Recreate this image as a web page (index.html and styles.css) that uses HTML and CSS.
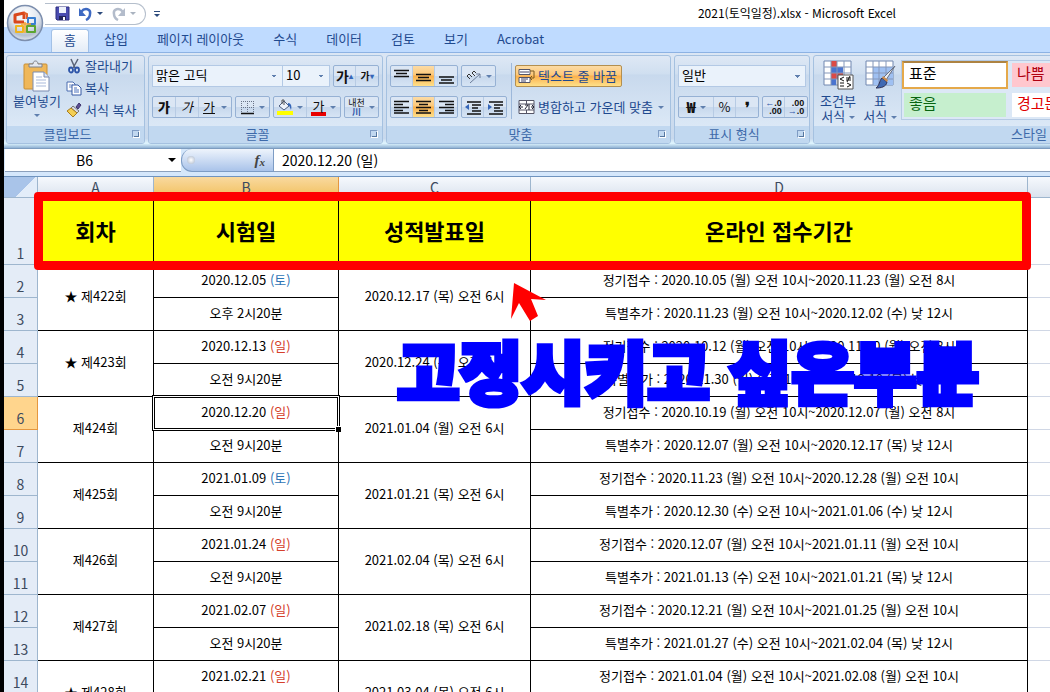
FILE: index.html
```
<!DOCTYPE html>
<html lang="ko">
<head>
    <meta charset="UTF-8">
    <meta name="viewport" content="width=device-width, initial-scale=1.0">
    <title>2021(토익일정).xlsx - Microsoft Excel</title>
    <link rel="stylesheet" href="styles.css">
</head>
<body>
    <div class="window">
        <header class="titlebar">
            <button class="office-button" aria-label="Office 단추">
                <svg width="38" height="38" viewBox="0 0 38 38">
                    <defs>
                        <radialGradient id="orb" cx="50%" cy="25%" r="80%">
                            <stop offset="0" stop-color="#ffffff"/>
                            <stop offset="0.5" stop-color="#dfe5ee"/>
                            <stop offset="0.75" stop-color="#b4bfd0"/>
                            <stop offset="1" stop-color="#eef4fb"/>
                        </radialGradient>
                    </defs>
                    <circle cx="19" cy="19" r="17.5" fill="url(#orb)" stroke="#7d8fae" stroke-width="1.5"/>
                    <g fill="none" stroke-linejoin="round">
                        <path d="M18 18h-9V11l9-2v6" stroke="#d9471c" stroke-width="3"/>
                        <path d="M18 9l3 1v5" stroke="#e2602a" stroke-width="2"/>
                        <path d="M22 14h7v6h-7z" stroke="#3b7fd0" stroke-width="2"/>
                        <path d="M10 22h7v6h-7z" stroke="#efb41d" stroke-width="2"/>
                        <path d="M21 22h8v6h-8z" stroke="#5ba532" stroke-width="2"/>
                        <path d="M19 18v11M15 20h10" stroke="#f3a43a" stroke-width="1.5"/>
                    </g>
                </svg>
            </button>
            <div class="quick-access">
                <button aria-label="저장">
                    <svg width="15" height="15" viewBox="0 0 15 15"><path d="M1 1h13v13H2l-1-1z" fill="#4a4cb0" stroke="#2d2f80"/><path d="M4 1h7v6H4z" fill="#eef2fb"/><path d="M4 10h7v4H4z" fill="#23255c"/><path d="M8 11h2v3H8z" fill="#fff"/></svg>
                </button>
                <button class="with-arrow" aria-label="실행 취소">
                    <svg width="15" height="14" viewBox="0 0 15 14"><path d="M3 5C7 0 13 2 12 7c0 3-2 5-4 6" fill="none" stroke="#3d69c2" stroke-width="2.5"/><path d="M1 1v8h7z" fill="#3d69c2"/></svg>
                    <span class="arrow"></span>
                </button>
                <button class="with-arrow disabled" aria-label="다시 실행">
                    <svg width="15" height="14" viewBox="0 0 15 14"><path d="M12 5C8 0 2 2 3 7c0 3 2 5 4 6" fill="none" stroke="#b3bccb" stroke-width="2.5"/><path d="M14 1v8H7z" fill="#b3bccb"/></svg>
                    <span class="arrow"></span>
                </button>
            </div>
            <button class="customize" aria-label="빠른 실행 도구 모음 사용자 지정"><span class="arrow"></span></button>
            <h1>2021(토익일정).xlsx - Microsoft Excel</h1>
        </header>

        <nav class="tabs">
            <button class="tab active">홈</button>
            <button class="tab">삽입</button>
            <button class="tab">페이지 레이아웃</button>
            <button class="tab">수식</button>
            <button class="tab">데이터</button>
            <button class="tab">검토</button>
            <button class="tab">보기</button>
            <button class="tab">Acrobat</button>
        </nav>

        <div class="ribbon">
            <section class="group clipboard">
                <div class="group-body">
                    <button class="big-button">
                        <svg width="28" height="32" viewBox="0 0 28 32"><rect x="1" y="4" width="23" height="25" rx="1" fill="#efb759" stroke="#c98f35"/><path d="M6 7V4h4c0-4 5-4 5 0h4v3z" fill="#e4e7ee" stroke="#7d818c"/><path d="M10 12h11l5 5v14H10z" fill="#fff" stroke="#7a8bb0"/><path d="M21 12v5h5" fill="#dce5f5" stroke="#7a8bb0"/><path d="M13 17h6M13 20h10M13 23h10M13 26h10" stroke="#a9b9da"/></svg>
                        <span>붙여넣기</span>
                        <span class="arrow"></span>
                    </button>
                    <div class="commands">
                        <button>
                            <svg width="16" height="16" viewBox="0 0 16 16"><path d="M5 1l4 9M12 1L7 10" stroke="#5b6478" stroke-width="1.5" fill="none"/><ellipse cx="5" cy="12" rx="2" ry="2.5" fill="none" stroke="#2e55a8" stroke-width="1.8"/><ellipse cx="11" cy="12" rx="2" ry="2.5" fill="none" stroke="#2e55a8" stroke-width="1.8"/></svg>
                            잘라내기
                        </button>
                        <button>
                            <svg width="16" height="16" viewBox="0 0 16 16"><path d="M1 2h6l2 2v7H1z" fill="#fff" stroke="#4a6db0"/><path d="M3 5h4M3 7h4" stroke="#6f8cc4"/><path d="M6 5h6l3 3v7H6z" fill="#fff" stroke="#3558a3"/><path d="M8 8h3M8 10h5M8 12h5" stroke="#4c72bd"/></svg>
                            복사
                        </button>
                        <button>
                            <svg width="16" height="16" viewBox="0 0 16 16"><path d="M10 5l3-4 2 2-3 4z" fill="#5c4f92" stroke="#403670"/><path d="M7 4l6 5-2 2-6-5z" fill="#d8dbe5" stroke="#777"/><path d="M5 6l6 5-4 4-6-6z" fill="#f3cf55" stroke="#a97c1b"/></svg>
                            서식 복사
                        </button>
                    </div>
                </div>
                <footer>클립보드<button class="launcher" aria-label="클립보드 옵션"></button></footer>
            </section>

            <section class="group font">
                <div class="group-body rows">
                    <div class="row">
                        <div class="joined">
                            <select class="font-name" aria-label="글꼴"><option>맑은 고딕</option></select>
                            <select class="font-size" aria-label="글꼴 크기"><option>10</option></select>
                        </div>
                        <div class="button-set">
                            <button class="grow" aria-label="글꼴 크기 크게">가<sup>▴</sup></button>
                            <button class="shrink" aria-label="글꼴 크기 작게">가<sup>▾</sup></button>
                        </div>
                    </div>
                    <div class="row">
                        <div class="button-set wide">
                            <button class="bold">가</button>
                            <button class="italic">가</button>
                            <button class="underline"><u>가</u><span class="arrow"></span></button>
                        </div>
                        <div class="button-set">
                            <button class="split" aria-label="테두리">
                                <svg width="15" height="15" viewBox="0 0 15 15"><path d="M1.5 1v12M7.5 1v12M13.5 1v12M1 1.5h13M1 7.5h13" stroke="#6a7488" stroke-dasharray="1 1"/><path d="M1 13.5h13" stroke="#111" stroke-width="1.5"/></svg>
                                <span class="arrow"></span>
                            </button>
                        </div>
                        <div class="button-set">
                            <button class="split" aria-label="채우기 색">
                                <svg width="16" height="16" viewBox="0 0 16 16"><path d="M2 7l5-5 5 5-5 4z" fill="#eef3fa" stroke="#4b5d80"/><path d="M5 5V1h2v5" fill="none" stroke="#555"/><path d="M11 4c3 0 4 3 3 7-1-2-1-4-3-5z" fill="#3566b8"/><path d="M0 12h16v4H0z" fill="#ffff00"/></svg>
                                <span class="arrow"></span>
                            </button>
                            <button class="split" aria-label="글꼴 색"><span class="font-color">가</span><span class="arrow"></span></button>
                        </div>
                        <div class="button-set">
                            <button class="split phonetic"><span>내천<b>川</b></span><span class="arrow"></span></button>
                        </div>
                    </div>
                </div>
                <footer>글꼴<button class="launcher" aria-label="글꼴 옵션"></button></footer>
            </section>

            <section class="group align">
                <div class="group-body">
                    <div class="rows">
                        <div class="row">
                            <div class="button-set">
                                <button aria-label="위쪽 맞춤"><svg width="15" height="15"><path d="M0 1.5h15M2 4.5h11M0 7.5h15" stroke="#111" stroke-width="1.5"/></svg></button>
                                <button class="on" aria-label="가운데 맞춤"><svg width="15" height="15"><path d="M0 5.5h15M2 8.5h11M0 11.5h15" stroke="#111" stroke-width="1.5"/></svg></button>
                                <button aria-label="아래쪽 맞춤"><svg width="15" height="15"><path d="M0 8h15M2 11h11M0 14h15" stroke="#111" stroke-width="1.5"/></svg></button>
                            </div>
                            <div class="button-set">
                                <button class="split" aria-label="방향">
                                    <svg width="16" height="15" viewBox="0 0 16 15"><path d="M1 7l3 3M3 5l3 3M6 4l3 3M1 7l2-2 2 2M6 4l2-2 2 2" fill="none" stroke="#333"/><path d="M4 14L14 5M14 9V5h-4" fill="none" stroke="#6c7c98"/></svg>
                                    <span class="arrow"></span>
                                </button>
                            </div>
                        </div>
                        <div class="row">
                            <div class="button-set">
                                <button aria-label="왼쪽 맞춤"><svg width="15" height="14"><path d="M0 1.5h15M0 4.5h9M0 7.5h15M0 10.5h9M0 13h15" stroke="#111" stroke-width="1.5"/></svg></button>
                                <button class="on" aria-label="중앙 맞춤"><svg width="15" height="14"><path d="M0 1.5h15M3 4.5h9M0 7.5h15M3 10.5h9M0 13h15" stroke="#111" stroke-width="1.5"/></svg></button>
                                <button aria-label="오른쪽 맞춤"><svg width="15" height="14"><path d="M0 1.5h15M6 4.5h9M0 7.5h15M6 10.5h9M0 13h15" stroke="#111" stroke-width="1.5"/></svg></button>
                            </div>
                            <div class="button-set">
                                <button aria-label="내어쓰기"><svg width="16" height="15"><path d="M2 2h14M7 5h9M7 8h6M7 11h9M2 14h14" stroke="#111" stroke-width="1.5"/><path d="M0 7l4-3v6z" fill="#3566b8"/></svg></button>
                                <button aria-label="들여쓰기"><svg width="16" height="15"><path d="M2 2h14M7 5h9M7 8h6M7 11h9M2 14h14" stroke="#111" stroke-width="1.5"/><path d="M5 7L1 4v6z" fill="#3566b8"/></svg></button>
                            </div>
                        </div>
                    </div>
                    <div class="rows text-rows">
                        <button class="text-button on">
                            <svg width="17" height="16" viewBox="0 0 17 16"><path d="M1 1.5h11v5H1zM1 9.5h11v5H1z" fill="#fff" stroke="#556"/><path d="M2 4h9M3 11h7M3 13h5" stroke="#446"/><path d="M12 3h4v7h-3M14 8l-2 2 2 2" fill="none" stroke="#7a5a20"/></svg>
                            텍스트 줄 바꿈
                        </button>
                        <button class="text-button">
                            <svg width="17" height="16" viewBox="0 0 17 16"><path d="M1 1.5h15v13H1zM1 5h15M1 11h15M8.5 1v4M8.5 11v4" fill="#fff" stroke="#556"/><path d="M1 8h4M3 6L1 8l2 2M16 8h-3M14 6l2 2-2 2M7 6h3l-3 4M11 5v6" fill="none" stroke="#223"/></svg>
                            병합하고 가운데 맞춤<span class="arrow"></span>
                        </button>
                    </div>
                </div>
                <footer>맞춤<button class="launcher" aria-label="맞춤 옵션"></button></footer>
            </section>

            <section class="group number">
                <div class="group-body rows">
                    <div class="row">
                        <select class="number-format" aria-label="표시 형식"><option>일반</option></select>
                    </div>
                    <div class="row">
                        <div class="button-set currency">
                            <button class="split"><b>₩</b><span class="arrow"></span></button>
                            <button>%</button>
                            <button><b>❜</b></button>
                        </div>
                        <div class="button-set decimals">
                            <button><span><i>←</i>.0<br>.00</span></button>
                            <button><span>.00<br><i>→</i>.0</span></button>
                        </div>
                    </div>
                </div>
                <footer>표시 형식<button class="launcher" aria-label="표시 형식 옵션"></button></footer>
            </section>

            <section class="group styles">
                <div class="group-body">
                    <button class="big-button">
                        <svg width="32" height="30" viewBox="0 0 32 30"><path d="M2 1h27v24H2z" fill="#fff" stroke="#7187b0"/><path d="M9 1h6v6H9zM9 13h12v6H9z" fill="#dc4a45"/><path d="M9 7h12v6H9z" fill="#4a74cf"/><path d="M9 19h5v6H9z" fill="#4a74cf"/><path d="M2 7h27M2 13h27M2 19h27M9 1v24M15 1v24M22 1v24" stroke="#8497ba" fill="none"/><path d="M16 15h15v14H16z" fill="#fff" stroke="#555"/><path d="M22 17l-4 2 4 2M18 23h4M24 18h5M24 20h5M28 16l-3 6M25 23l4 2-4 2M18 26h4" fill="none" stroke="#111"/></svg>
                        <span>조건부</span>
                        <span>서식 <span class="arrow"></span></span>
                    </button>
                    <button class="big-button">
                        <svg width="32" height="30" viewBox="0 0 32 30"><path d="M2 1h27v24H2z" fill="#fff" stroke="#7187b0"/><path d="M9 7h20v18H9z" fill="#9fc0f2"/><path d="M2 7h27M2 13h27M2 19h27M9 1v24M15 1v24M22 1v24" stroke="#8497ba" fill="none"/><path d="M31 6l-9 14-3-2z" fill="#e9edf4" stroke="#6a7080"/><path d="M18 18l5 4c-1 5-6 6-11 6 4-3 3-7 6-10z" fill="#4069b2" stroke="#335"/><path d="M18 18l5 4 1-2-5-4z" fill="#c98a4c"/></svg>
                        <span>표</span>
                        <span>서식 <span class="arrow"></span></span>
                    </button>
                    <div class="gallery">
                        <button class="style-normal">표준</button>
                        <button class="style-bad">나쁨</button>
                        <button class="style-good">좋음</button>
                        <button class="style-warning">경고문</button>
                    </div>
                </div>
                <footer>스타일</footer>
            </section>
        </div>

        <div class="formula-bar">
            <div class="name-box">
                <input type="text" value="B6" aria-label="이름 상자">
                <span class="arrow"></span>
            </div>
            <div class="fx"><span class="knob"></span><button aria-label="함수 삽입">f<small>x</small></button></div>
            <input class="formula" type="text" value="2020.12.20 (일)" aria-label="수식 입력줄">
        </div>

        <main class="sheet">
            <table>
                <colgroup>
                    <col class="col-head">
                    <col class="col-a">
                    <col class="col-b">
                    <col class="col-c">
                    <col class="col-d">
                    <col>
                </colgroup>
                <thead>
                    <tr>
                        <th class="corner"></th>
                        <th>A</th>
                        <th class="selected">B</th>
                        <th>C</th>
                        <th>D</th>
                        <th class="last"></th>
                    </tr>
                </thead>
                <tbody>
                    <tr class="title-row">
                        <th scope="row">1</th>
                        <td>회차</td>
                        <td>시험일</td>
                        <td>성적발표일</td>
                        <td>온라인 접수기간</td>
                        <td class="empty"></td>
                    </tr>
                    <tr>
                        <th scope="row">2</th>
                        <td rowspan="2">★ 제422회</td>
                        <td>2020.12.05 <span class="sat">(토)</span></td>
                        <td rowspan="2">2020.12.17 (목) 오전 6시</td>
                        <td>정기접수 : 2020.10.05 (월) 오전 10시~2020.11.23 (월) 오전 8시</td>
                        <td class="empty"></td>
                    </tr>
                    <tr>
                        <th scope="row">3</th>
                        <td>오후 2시20분</td>
                        <td>특별추가 : 2020.11.23 (월) 오전 10시~2020.12.02 (수) 낮 12시</td>
                        <td class="empty"></td>
                    </tr>
                    <tr>
                        <th scope="row">4</th>
                        <td rowspan="2">★ 제423회</td>
                        <td>2020.12.13 <span class="sun">(일)</span></td>
                        <td rowspan="2">2020.12.24 (목) 오전 6시</td>
                        <td>정기접수 : 2020.10.12 (월) 오전 10시~2020.11.30 (월) 오전 8시</td>
                        <td class="empty"></td>
                    </tr>
                    <tr>
                        <th scope="row">5</th>
                        <td>오전 9시20분</td>
                        <td>특별추가 : 2020.11.30 (월) 오전 10시~2020.12.10 (목) 낮 12시</td>
                        <td class="empty"></td>
                    </tr>
                    <tr>
                        <th scope="row" class="selected">6</th>
                        <td rowspan="2">제424회</td>
                        <td class="active-cell">2020.12.20 <span class="sun">(일)</span></td>
                        <td rowspan="2">2021.01.04 (월) 오전 6시</td>
                        <td>정기접수 : 2020.10.19 (월) 오전 10시~2020.12.07 (월) 오전 8시</td>
                        <td class="empty"></td>
                    </tr>
                    <tr>
                        <th scope="row">7</th>
                        <td>오전 9시20분</td>
                        <td>특별추가 : 2020.12.07 (월) 오전 10시~2020.12.17 (목) 낮 12시</td>
                        <td class="empty"></td>
                    </tr>
                    <tr>
                        <th scope="row">8</th>
                        <td rowspan="2">제425회</td>
                        <td>2021.01.09 <span class="sat">(토)</span></td>
                        <td rowspan="2">2021.01.21 (목) 오전 6시</td>
                        <td>정기접수 : 2020.11.23 (월) 오전 10시~2020.12.28 (월) 오전 10시</td>
                        <td class="empty"></td>
                    </tr>
                    <tr>
                        <th scope="row">9</th>
                        <td>오전 9시20분</td>
                        <td>특별추가 : 2020.12.30 (수) 오전 10시~2021.01.06 (수) 낮 12시</td>
                        <td class="empty"></td>
                    </tr>
                    <tr>
                        <th scope="row">10</th>
                        <td rowspan="2">제426회</td>
                        <td>2021.01.24 <span class="sun">(일)</span></td>
                        <td rowspan="2">2021.02.04 (목) 오전 6시</td>
                        <td>정기접수 : 2020.12.07 (월) 오전 10시~2021.01.11 (월) 오전 10시</td>
                        <td class="empty"></td>
                    </tr>
                    <tr>
                        <th scope="row">11</th>
                        <td>오전 9시20분</td>
                        <td>특별추가 : 2021.01.13 (수) 오전 10시~2021.01.21 (목) 낮 12시</td>
                        <td class="empty"></td>
                    </tr>
                    <tr>
                        <th scope="row">12</th>
                        <td rowspan="2">제427회</td>
                        <td>2021.02.07 <span class="sun">(일)</span></td>
                        <td rowspan="2">2021.02.18 (목) 오전 6시</td>
                        <td>정기접수 : 2020.12.21 (월) 오전 10시~2021.01.25 (월) 오전 10시</td>
                        <td class="empty"></td>
                    </tr>
                    <tr>
                        <th scope="row">13</th>
                        <td>오전 9시20분</td>
                        <td>특별추가 : 2021.01.27 (수) 오전 10시~2021.02.04 (목) 낮 12시</td>
                        <td class="empty"></td>
                    </tr>
                    <tr>
                        <th scope="row">14</th>
                        <td rowspan="2">★ 제428회</td>
                        <td>2021.02.21 <span class="sun">(일)</span></td>
                        <td rowspan="2">2021.03.04 (목) 오전 6시</td>
                        <td>정기접수 : 2021.01.04 (월) 오전 10시~2021.02.08 (월) 오전 10시</td>
                        <td class="empty"></td>
                    </tr>
                    <tr>
                        <th scope="row">15</th>
                        <td></td>
                        <td></td>
                        <td class="empty"></td>
                    </tr>
                </tbody>
            </table>

            <!-- notes drawn over the sheet -->
            <div class="mark-box"></div>
            <svg class="mark-arrow" width="36" height="40" viewBox="0 0 36 40"><path d="M4 1l32 17-15-1 7 17-8 5-11-18-8 16z" fill="#ff0000"/></svg>
            <p class="mark-text">고정시키고 싶은부분</p>
        </main>
    </div>
</body>
</html>
```
FILE: styles.css
```
* {
    box-sizing: border-box;
}
body {
    margin: 0;
    height: 100vh;
    overflow: hidden;
    background: #000;
    font-family: "Noto Sans CJK KR", sans-serif;
    font-size: 13px;
    line-height: 16px;
    color: #000;
}
button, input, select {
    font: inherit;
    color: inherit;
    margin: 0;
    padding: 0;
    border: none;
    background: none;
}
button {
    display: flex;
    align-items: center;
    justify-content: center;
    white-space: nowrap;
}
svg {
    flex: none;
}
.window {
    margin-left: 4px;
    height: 100%;
    background: #fff;
    overflow: hidden;
    position: relative;
}
.arrow {
    display: inline-block;
    flex: none;
    border: 3px solid transparent;
    border-top-color: #5f7fae;
    border-bottom: none;
}

/* title bar */
.titlebar {
    display: flex;
    align-items: center;
    height: 27px;
    padding-left: 41px;
}
.titlebar h1 {
    margin: 0 154px 0 auto;
    padding-bottom: 2px;
    font-size: 12px;
    font-weight: normal;
}
.office-button {
    position: absolute;
    left: 2px;
    top: 4px;
    z-index: 2;
}
.quick-access {
    display: flex;
    align-items: center;
    gap: 8px;
    width: 101px;
    height: 22px;
    padding-left: 10px;
    border: 1px solid #b5bfcc;
    border-left: none;
    border-radius: 0 11px 11px 0;
}
.quick-access .with-arrow {
    gap: 4px;
}
.quick-access .arrow, .customize .arrow {
    border-top-color: #2c4a7c;
}
.quick-access .disabled .arrow {
    border-top-color: #aab3c0;
}
.customize {
    margin-left: 8px;
    padding-top: 2px;
    border-top: 1px solid #2c4a7c;
}

/* tabs */
.tabs {
    display: flex;
    gap: 1px;
    height: 25px;
    padding: 2px 0 0 47px;
    background: #bfdbff;
    color: #1f4a8f;
}
.tab {
    padding: 0 14px 3px;
}
.tab.active {
    padding: 0 12px 3px;
    border: 1px solid #a3c1e6;
    border-bottom: none;
    border-radius: 3px 3px 0 0;
    background: linear-gradient(#fff, #e3ecf7);
}

/* ribbon */
.ribbon {
    display: flex;
    gap: 3px;
    height: 97px;
    padding: 2px 0 4px 2px;
    border-top: 1px solid #8db2e3;
    border-bottom: 1px solid #7d9cbf;
    background: linear-gradient(#dbe6f4, #c8d9ed 90%, #e0f6ff 95%, #8fb1d3);
    color: #1f4a8f;
}
.group {
    display: flex;
    flex-direction: column;
    flex: none;
    border: 1px solid #a5c1e0;
    border-radius: 3px;
    background: linear-gradient(#dee8f5, #d0dff0 20%, #c8d9ed 22%, #dbe8f6 80%);
    overflow: hidden;
}
.group footer {
    display: flex;
    justify-content: center;
    align-items: center;
    height: 17px;
    padding: 0 16px 2px 0;
    background: #c1d8f0;
    color: #3e6aaa;
    position: relative;
}
.group-body {
    display: flex;
    flex: 1;
    padding: 0 3px;
}
.clipboard {
    width: 139px;
}
.font {
    width: 235px;
}
.align {
    width: 285px;
}
.number {
    width: 136px;
}
.styles {
    flex: 1 0 420px;
}
.launcher {
    position: absolute;
    right: 4px;
    top: 4px;
    width: 8px;
    height: 8px;
    border: 1px solid #7f9cc4;
    border-right-color: #fff;
    border-bottom-color: #fff;
}
.launcher::after {
    content: "";
    width: 4px;
    height: 4px;
    border: solid #55769f;
    border-width: 0 1px 1px 0;
}
.rows {
    display: flex;
    flex-direction: column;
    gap: 9px;
    padding-top: 9px;
}
.row {
    display: flex;
    gap: 3px;
}
.joined {
    display: flex;
}
select {
    height: 22px;
    padding: 0 0 2px 3px;
    border: 1px solid #b3c9e5;
    background-color: #eaf2fb;
    background-image: conic-gradient(from -45deg at 50% 100%, #5f7fae 90deg, transparent 0);
    background-size: 6px 3px;
    background-position: right 5px center;
    background-repeat: no-repeat;
    color: #000;
    appearance: none;
}
.font-name {
    width: 131px;
}
.font-size {
    width: 48px;
    margin-left: -1px;
}
.number-format {
    width: 128px;
}
.button-set {
    display: flex;
    height: 22px;
    border: 1px solid #96b1d4;
    border-radius: 2px;
    background: linear-gradient(#dbe6f4 50%, #c6d7ec 50%, #d6e4f4);
    color: #111;
}
.button-set button {
    width: 22px;
    border-right: 1px solid #b7cbe4;
}
.button-set button:last-child {
    border-right: none;
}
.button-set button.split {
    width: 33px;
    gap: 4px;
}
.button-set.wide button {
    width: 23px;
}
.button-set.wide button.underline {
    width: 32px;
    gap: 6px;
}
.button-set button.on, .text-button.on {
    background: linear-gradient(#fcdba5, #fdc878 45%, #fbb04c 50%, #fee08a);
}
.bold {
    font-weight: 900;
}
.italic {
    font-style: italic;
}
.grow {
    font-size: 14px;
    font-weight: bold;
}
.shrink {
    font-size: 10px;
    font-weight: bold;
}
.button-set sup {
    font-size: 8px;
    color: #3566b8;
}
.font-color {
    height: 17px;
    line-height: 13px;
    border-bottom: 4px solid #e80000;
    padding: 0 2px;
}
.phonetic {
    font-size: 9px;
    line-height: 9px;
}
.phonetic b {
    display: block;
    color: #2e55a8;
}
.big-button {
    flex-direction: column;
    justify-content: flex-start;
    padding-top: 4px;
    line-height: 15px;
}
.big-button svg {
    margin-bottom: 3px;
}
.big-button > .arrow {
    margin-top: 6px;
}
.big-button .arrow {
    vertical-align: middle;
}
.clipboard .big-button {
    width: 54px;
}
.clipboard .big-button svg {
    margin-bottom: 1px;
}
.commands {
    display: flex;
    flex-direction: column;
    gap: 6px;
    padding: 2px 0 0 2px;
}
.commands button {
    justify-content: flex-start;
    gap: 3px;
}
.text-rows {
    margin: 7px 0 7px 4px;
    padding: 2px 0 0 3px;
    border-left: 1px solid #9db8da;
}
.text-button {
    justify-content: flex-start;
    gap: 3px;
    width: 151px;
    height: 22px;
    padding: 0 2px;
    border: 1px solid transparent;
}
.text-button .arrow {
    margin-left: 2px;
}
.text-button.on {
    width: 107px;
    border-color: #b38f50;
    border-radius: 2px;
}
.currency b {
    font-size: 15px;
    font-weight: 900;
}
.currency button.split {
    width: 35px;
}
.decimals {
    font-family: "Liberation Sans", sans-serif;
    font-size: 9px;
    font-weight: bold;
    line-height: 8px;
}
.decimals i {
    font-style: normal;
    color: #2e55a8;
}
.decimals span {
    text-align: right;
}
.styles .big-button {
    width: 42px;
}
.gallery {
    display: grid;
    grid-template-columns: 106px 106px;
    grid-template-rows: 28px 28px;
    gap: 2px;
    align-content: start;
    width: 240px;
    height: 60px;
    margin-top: 4px;
    border: 1px solid #b5cae4;
    background: #dce8f6;
}
.gallery button {
    justify-content: flex-start;
    margin: 2px;
    padding: 0 0 4px 5px;
    font-size: 15px;
}
.gallery .style-normal {
    margin: 0;
    border: 2px solid #e5a94a;
    border-top-color: #ad8342;
    background: #fff;
    color: #000;
}
.gallery .style-bad {
    background: #ffc7ce;
    color: #b00010;
}
.gallery .style-good {
    background: #c6efce;
    color: #086410;
}
.gallery .style-warning {
    background: #fff;
    color: #e00000;
}
.styles footer {
    justify-content: flex-start;
    padding-left: 197px;
}

/* formula bar */
.formula-bar {
    display: flex;
    height: 28px;
    padding: 0 0 4px 1px;
    border-bottom: 1px solid #6f94bf;
    background: #d5e7fb;
    font-size: 14px;
}
.name-box {
    display: flex;
    align-items: center;
    width: 176px;
    padding-right: 5px;
    border-bottom: 1px solid #8ba0bc;
    background: #fff;
}
.name-box input {
    flex: 1;
    min-width: 0;
    text-align: center;
    padding-right: 4px;
}
.name-box .arrow {
    border-width: 4px 4px 0 4px;
    border-top-color: #000;
}
.fx {
    display: flex;
    align-items: center;
    justify-content: space-between;
    width: 93px;
    padding: 0 8px 0 5px;
    border: 1px solid #7d9cc4;
    border-top: none;
    border-radius: 11px 0 0 11px;
    background: linear-gradient(#eef4fc, #a9c3ea);
}
.fx button {
    font: italic bold 15px "Liberation Serif", serif;
    color: #444;
}
.fx small {
    font-size: 11px;
    padding-top: 4px;
}
.knob {
    width: 8px;
    height: 8px;
    border-radius: 50%;
    background: radial-gradient(#fff, #a8b6ca);
}
.formula {
    flex: 1;
    min-width: 0;
    padding-left: 8px;
    border-bottom: 1px solid #8ba0bc;
    background: #fff;
}

/* sheet */
.sheet {
    position: relative;
}
table {
    width: 100%;
    table-layout: fixed;
    border-collapse: separate;
    border-spacing: 0;
}
.col-head {
    width: 34px;
}
.col-a {
    width: 116px;
}
.col-b {
    width: 185px;
}
.col-c {
    width: 192px;
}
.col-d {
    width: 497px;
}
th, td {
    height: 33px;
    padding: 0;
    text-align: center;
    white-space: nowrap;
    overflow: hidden;
    border: solid #000;
    border-width: 0 1px 1px 0;
}
td {
    padding-bottom: 3px;
}
th {
    font-size: 14px;
    font-weight: normal;
    color: #3c4a5e;
    border-color: #9eb6ce;
    background: #e4ecf7;
}
thead th {
    height: 21px;
    background: linear-gradient(#f6f9fd, #dbe3ee);
}
thead th.selected {
    background: linear-gradient(#f9d99f, #f1c15f);
    border-color: #e5973f;
}
thead th.corner {
    background: linear-gradient(135deg, transparent 60%, #e3edf9 60%), #a9c4e9;
}
thead th.last {
    border-right: none;
}
tbody th {
    vertical-align: bottom;
    padding-bottom: 3px;
}
tbody th.selected {
    background: #ffd58d;
    border-color: #e5973f;
}
.title-row td, .title-row th {
    height: 67px;
}
.title-row td {
    background: #ffff00;
    font-size: 22px;
    font-weight: bold;
}
td.empty, .title-row td.empty {
    background: #fff;
    border-color: #d0d7e5;
    border-right: none;
}
.sat {
    color: #2e75b6;
}
.sun {
    color: #d5402b;
}

/* selection frame and fill handle */
.active-cell {
    position: relative;
    overflow: visible;
}
.active-cell::before {
    content: "";
    position: absolute;
    inset: -2px;
    border: 1px solid #000;
    box-shadow: inset 0 0 0 1px #fff, inset 0 0 0 2px #000;
}
.active-cell::after {
    content: "";
    position: absolute;
    right: -3px;
    bottom: -3px;
    width: 5px;
    height: 5px;
    border: solid #fff;
    border-width: 1px 0 0 1px;
    background: #000;
}

/* notes */
.mark-box {
    position: absolute;
    left: 30px;
    top: 15px;
    width: 997px;
    height: 78px;
    border: 9px solid #ff0000;
    border-radius: 4px;
}
.mark-arrow {
    position: absolute;
    left: 506px;
    top: 105px;
}
.mark-text {
    position: absolute;
    left: 393px;
    top: 158px;
    margin: 0;
    font-size: 68px;
    line-height: 70px;
    font-weight: 900;
    color: #0000ff;
    white-space: nowrap;
    -webkit-text-stroke: 5px #0000ff;
}
```
